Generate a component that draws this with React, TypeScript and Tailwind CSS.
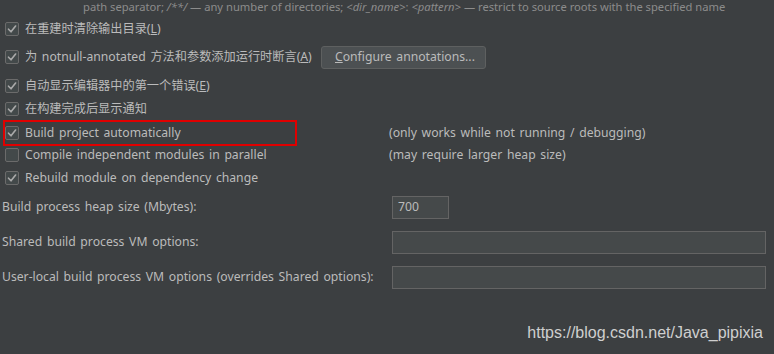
import React from "react";

const font = { fontFamily: '"Noto Sans", "Noto Sans CJK SC", sans-serif' };

function Check({ checked }: { checked: boolean }) {
  return (
    <div className="w-[14px] h-[14px] rounded-[2px] border border-[#6b6b6b] bg-[#43494a] flex items-center justify-center shrink-0">
      {checked && (
        <svg width="10" height="10" viewBox="0 0 10 10">
          <path d="M1.5 5.2 L4 7.8 L8.6 2" fill="none" stroke="#aaaaaa" strokeWidth="1.6" strokeLinecap="round" strokeLinejoin="round" />
        </svg>
      )}
    </div>
  );
}

function CheckRow({
  checked,
  children,
  className,
  right,
}: {
  checked: boolean;
  children: React.ReactNode;
  className: string;
  right?: React.ReactNode;
}) {
  return (
    <div className={`flex items-center h-[22px] ${className}`}>
      <div className="flex items-center w-[389px] shrink-0 pl-[5px] gap-[6px]">
        <Check checked={checked} />
        <span className="whitespace-nowrap">{children}</span>
      </div>
      {right}
    </div>
  );
}

export default function App() {
  return (
    <div className="w-[774px] h-[354px] bg-[#3c3f41] text-[#bbbbbb] text-[12.2px] leading-none [word-spacing:1.5px] overflow-hidden relative" style={font}>
      <div className="flex flex-col">
        <div className="h-[14px] flex items-center pl-[83px] text-[11.2px] text-[#8c8c8c] whitespace-nowrap [word-spacing:0px]">
          path separator;&nbsp;<i>/**/</i>&nbsp;— any number of directories;&nbsp;<i>&lt;dir_name&gt;</i>:&nbsp;<i>&lt;pattern&gt;</i>&nbsp;— restrict to source roots with the specified name
        </div>
        <CheckRow checked className="mt-[4px]">
          在重建时清除输出目录(<u>L</u>)
        </CheckRow>
        <div className="flex items-center h-[24px] mt-[5px]">
          <div className="flex items-center w-[321px] shrink-0 pl-[5px] gap-[6px]">
            <Check checked />
            <span className="whitespace-nowrap">为 notnull-annotated 方法和参数添加运行时断言(<u>A</u>)</span>
          </div>
          <div className="h-[23px] w-[165px] rounded-[3px] border border-[#5e6060] bg-[#4c5052] flex items-center pl-[13px] whitespace-nowrap">
            <u>C</u>onfigure annotations...
          </div>
        </div>
        <CheckRow checked className="mt-[6px]">
          自动显示编辑器中的第一个错误(<u>E</u>)
        </CheckRow>
        <CheckRow checked className="mt-[1px]">
          在构建完成后显示通知
        </CheckRow>
        <CheckRow
          checked
          className="mt-[2px]"
          right={<span className="whitespace-nowrap">(only works while not running / debugging)</span>}
        >
          Build project automatically
        </CheckRow>
        <CheckRow
          checked={false}
          right={<span className="whitespace-nowrap">(may require larger heap size)</span>}
        >
          Compile independent modules in parallel
        </CheckRow>
        <CheckRow checked className="mt-[1px]">
          Rebuild module on dependency change
        </CheckRow>
        <div className="flex items-center h-[24px] mt-[6px]">
          <span className="w-[392px] pl-[2px] shrink-0 whitespace-nowrap">Build process heap size (Mbytes):</span>
          <div className="h-[23px] w-[57px] border border-[#646464] bg-[#45494a] flex items-center pl-[5px]">700</div>
        </div>
        <div className="flex items-center h-[24px] mt-[11px]">
          <span className="w-[392px] pl-[2px] shrink-0 whitespace-nowrap">Shared build process VM options:</span>
          <div className="h-[23px] w-[374px] border border-[#646464] bg-[#45494a]" />
        </div>
        <div className="flex items-center h-[24px] mt-[11px]">
          <span className="w-[392px] pl-[2px] shrink-0 whitespace-nowrap">User-local build process VM options (overrides Shared options):</span>
          <div className="h-[23px] w-[374px] border border-[#646464] bg-[#45494a]" />
        </div>
        <div className="flex justify-end pr-[11px] mt-[36px] [word-spacing:0px]">
          <span className="text-[16px] text-[#cfcfcf] whitespace-nowrap" style={{ fontFamily: '"Liberation Sans", Arial, sans-serif' }}>
            https://blog.csdn.net/Java_pipixia
          </span>
        </div>
      </div>
      <div className="absolute left-[3px] top-[120px] w-[294px] h-[26px] border-2 border-[#e00000]" />
    </div>
  );
}
